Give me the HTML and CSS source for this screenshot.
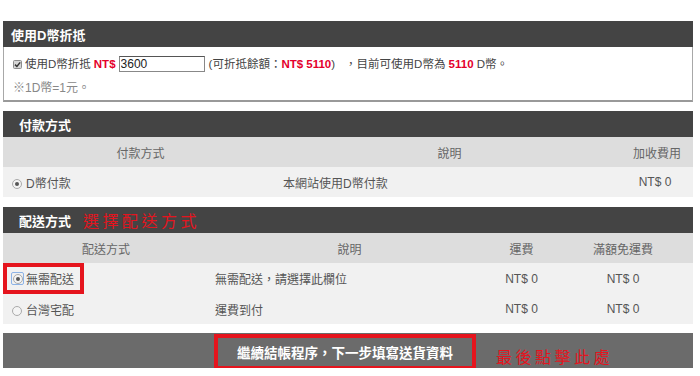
FILE: index.html
```html
<!DOCTYPE html>
<html lang="zh-Hant">

<head>
  <meta charset="UTF-8">
  <meta name="viewport" content="width=device-width, initial-scale=1.0">
  <title>結帳</title>
  <link rel="stylesheet" href="styles.css">
</head>

<body>
  <div class="page">

    <!-- D幣折抵 -->
    <section class="panel panel-coin">
      <h3 class="panel-title title-coin">使用D幣折抵</h3>
      <div class="coin-box">
        <p class="coin-row">
          <span class="chk">
            <svg width="9" height="9" viewBox="0 0 9 9">
              <rect x="0.5" y="0.5" width="8" height="8" rx="1" fill="#d6d6d6" stroke="#8c8c8c" />
              <path d="M2 4.6 L3.9 6.5 L7.2 2.4" fill="none" stroke="#333" stroke-width="1.5" />
            </svg>
          </span>
          使用D幣折抵 <b class="red">NT$</b> <input class="coin-input" type="text" value="3600">
          <span class="coin-left">(可折抵餘額：<b class="red">NT$ 5110</b>)</span>
          <span class="coin-now">，目前可使用D幣為 <b class="red">5110</b> D幣。</span>
        </p>
        <p class="coin-note">※1D幣=1元。</p>
      </div>
    </section>

    <!-- 付款方式 -->
    <section class="panel">
      <h3 class="panel-title">付款方式</h3>
      <table class="list pay-list">
        <colgroup>
          <col style="width:275px">
          <col style="width:343px">
          <col>
        </colgroup>
        <tr>
          <th>付款方式</th>
          <th>說明</th>
          <th>加收費用</th>
        </tr>
        <tr>
          <td class="opt"><span class="radio on"></span>D幣付款</td>
          <td class="desc">本網站使用D幣付款</td>
          <td class="num">NT$ 0</td>
        </tr>
      </table>
    </section>

    <!-- 配送方式 -->
    <section class="panel">
      <h3 class="panel-title">配送方式<span class="note">選擇配送方式</span></h3>
      <table class="list ship-list">
        <colgroup>
          <col style="width:206px">
          <col style="width:281px">
          <col style="width:63px">
          <col>
        </colgroup>
        <tr>
          <th>配送方式</th>
          <th>說明</th>
          <th>運費</th>
          <th>滿額免運費</th>
        </tr>
        <tr>
          <td class="opt opt-mark">
            <span class="mark"><span class="ring"><span class="radio on"></span></span>無需配送</span>
          </td>
          <td class="desc">無需配送，請選擇此欄位</td>
          <td class="num">NT$ 0</td>
          <td class="num">NT$ 0</td>
        </tr>
        <tr>
          <td class="opt"><span class="radio"></span>台灣宅配</td>
          <td class="desc">運費到付</td>
          <td class="num">NT$ 0</td>
          <td class="num">NT$ 0</td>
        </tr>
      </table>
    </section>

    <div class="next-bar">
      <a href="#" class="next-btn">繼續結帳程序，下一步填寫送貨資料</a>
      <span class="note note-end">最後點擊此處</span>
    </div>

  </div>
</body>

</html>
```

FILE: styles.css
```css
* {
  box-sizing: border-box;
}

body {
  margin: 0;
  background: #fff;
  color: #444;
  font-family: "Liberation Sans", "Noto Sans CJK TC", sans-serif;
  font-size: 12px;
}

.page {
  width: 690px;
  margin: 21px 0 0 3px;
}

.panel {
  margin-bottom: 10px;
}

.panel-coin {
  margin-bottom: 9px;
}

.panel-title {
  display: flex;
  align-items: center;
  height: 26px;
  margin: 0;
  padding-left: 16px;
  background: #444;
  color: #fff;
  font-size: 13px;
  font-weight: bold;
}

.title-coin {
  padding-left: 8px;
}

/* 手寫紅字提示 */
.note {
  margin-left: 12px;
  color: #e3151f;
  font-size: 16px;
  font-weight: normal;
  letter-spacing: 3.5px;
}

.red {
  color: #e4002b;
}

/* D幣折抵 */
.coin-box {
  height: 55px;
  padding: 6px 8px 0 9px;
  border: 1px solid #a8a8a8;
  border-top: none;
  border-bottom: 2px solid #999;
}

.coin-box p {
  margin: 0;
  line-height: 22px;
}

.coin-row {
  display: flex;
  align-items: center;
  color: #444;
  font-size: 11.5px;
  white-space: nowrap;
}

.chk {
  display: inline-flex;
  margin-right: 3px;
}

.coin-row > b {
  margin: 0 3px;
}

.coin-input {
  width: 86px;
  height: 16px;
  margin: 0 4px 0 0;
  padding: 0 1px;
  border: 1px solid #888;
  border-top-color: #555;
  font-family: "Liberation Sans", sans-serif;
  font-size: 12px;
  color: #222;
}

.coin-now {
  margin-left: 10px;
}

.coin-note {
  margin-top: 2px !important;
  color: #888;
}

/* 表格 */
.list {
  width: 100%;
  border-collapse: collapse;
  table-layout: fixed;
}

.list th,
.list td {
  height: 30px;
  padding: 0;
  text-align: center;
  white-space: nowrap;
}

.list th {
  background: #ddd;
  color: #666;
  font-weight: normal;
}

.list td {
  background: #f1f1f1;
  color: #555;
}

.list td.opt {
  padding-left: 9px;
  text-align: left;
}

.list td.desc {
  padding-left: 5px;
  text-align: left;
}

.ship-list td.desc {
  padding-left: 6px;
}

.pay-list td.num {
  padding-right: 4px;
}

.radio {
  display: inline-block;
  position: relative;
  width: 10px;
  height: 10px;
  margin-right: 4px;
  border: 1px solid #aaa;
  border-radius: 50%;
  background: #f4f4f4;
  vertical-align: -1px;
}

.radio.on::after {
  content: "";
  position: absolute;
  top: 2px;
  left: 2px;
  width: 4px;
  height: 4px;
  border-radius: 50%;
  background: #555;
}

/* 紅框標示 */
.list td.opt-mark {
  padding: 0;
  vertical-align: top;
}

.mark {
  display: flex;
  align-items: center;
  width: 81px;
  height: 31px;
  padding-left: 4px;
  border: 4px solid #e5141d;
}

.ring {
  display: inline-flex;
  align-items: center;
  justify-content: center;
  width: 13px;
  height: 13px;
  margin-right: 2px;
  border: 1px solid #8db3e6;
  border-radius: 2px;
}

.ring .radio {
  margin: 0;
  vertical-align: 0;
}

/* 下一步 */
.next-bar {
  display: flex;
  align-items: flex-start;
  height: 35px;
  margin-top: -1px;
  background: #6b6b6b;
}

.next-btn {
  display: flex;
  align-items: center;
  justify-content: center;
  width: 262px;
  height: 36px;
  margin: 1px 0 0 211px;
  border: 4px solid #e5141d;
  color: #fff;
  font-size: 13.5px;
  font-weight: bold;
  text-decoration: none;
}

.note-end {
  margin: 11px 0 0 20px;
}
```
